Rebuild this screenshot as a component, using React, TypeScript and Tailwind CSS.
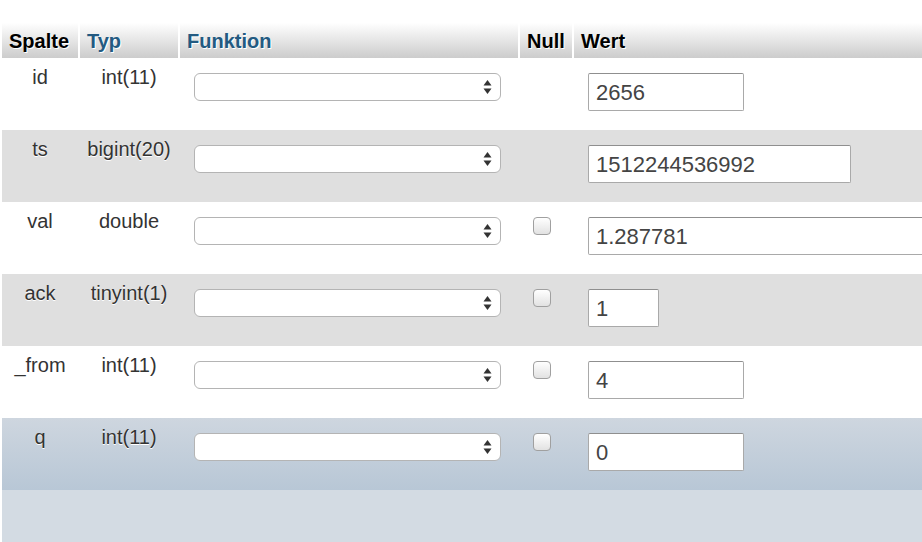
import React from "react";

type Row = { name: string; type: string; nullable: boolean; value: string; w: string; bg: string };

const rows: Row[] = [
  { name: "id", type: "int(11)", nullable: false, value: "2656", w: "w-[156px]", bg: "bg-white" },
  { name: "ts", type: "bigint(20)", nullable: false, value: "1512244536992", w: "w-[263px]", bg: "bg-[#dfdfdf]" },
  { name: "val", type: "double", nullable: true, value: "1.287781", w: "w-[420px]", bg: "bg-white" },
  { name: "ack", type: "tinyint(1)", nullable: true, value: "1", w: "w-[71px]", bg: "bg-[#dfdfdf]" },
  { name: "_from", type: "int(11)", nullable: true, value: "4", w: "w-[156px]", bg: "bg-white" },
  { name: "q", type: "int(11)", nullable: true, value: "0", w: "w-[156px]", bg: "bg-gradient-to-b from-[#ced6df] to-[#b8c7d6]" },
];

function HeaderCell({ children, w, blue }: { children: React.ReactNode; w: string; blue?: boolean }) {
  return (
    <div
      className={`${w} shrink-0 h-full flex items-center px-[7px] bg-gradient-to-b from-white to-[#cccccc] font-bold text-[20px] [text-shadow:1px_1px_0_#fff] ${
        blue ? "text-[#235a81]" : "text-black"
      }`}
    >
      {children}
    </div>
  );
}

function Select() {
  return (
    <div className="w-[307px] h-[28px] rounded-[6px] border border-[#b4b4b4] bg-white flex items-center justify-end pr-[8px] shadow-[inset_0_1px_0_#fff]">
      <div className="flex flex-col items-center leading-none text-[#333]">
        <svg width="9" height="16" viewBox="0 0 9 16">
          <path d="M4.5 1 L8.5 6.5 L0.5 6.5 Z" fill="#333" />
          <path d="M4.5 15 L8.5 9.5 L0.5 9.5 Z" fill="#333" />
        </svg>
      </div>
    </div>
  );
}

export default function App() {
  return (
    <div className="w-[922px] h-[542px] overflow-hidden bg-white font-['Liberation_Sans','Helvetica',Arial,sans-serif]">
      <div className="h-[23px]" />
      <div className="pl-[2px] flex gap-[2px] h-[35px]">
        <HeaderCell w="w-[76px]">Spalte</HeaderCell>
        <HeaderCell w="w-[98px]" blue>
          Typ
        </HeaderCell>
        <HeaderCell w="w-[338px]" blue>
          Funktion
        </HeaderCell>
        <HeaderCell w="w-[52px]">Null</HeaderCell>
        <HeaderCell w="w-[360px]">Wert</HeaderCell>
      </div>
      {rows.map((r) => (
        <div key={r.name} className={`ml-[2px] flex gap-[2px] h-[72px] ${r.bg}`}>
          <div className="w-[76px] shrink-0 text-center pt-[8px] text-[20px] leading-[23px] text-[#333] [text-shadow:0_1px_0_#fff]">
            {r.name}
          </div>
          <div className="w-[98px] shrink-0 text-center pt-[8px] text-[20px] leading-[23px] text-[#333] [text-shadow:0_1px_0_#fff]">
            {r.type}
          </div>
          <div className="w-[338px] shrink-0 pt-[15px] pl-[14px]">
            <Select />
          </div>
          <div className="w-[52px] shrink-0 pt-[15px] pl-[13px]">
            {r.nullable && (
              <div className="w-[18px] h-[18px] rounded-[4px] border border-[#a0a0a0] bg-gradient-to-b from-white to-[#e2e2e2]" />
            )}
          </div>
          <div className="shrink-0 pt-[15px] pl-[14px]">
            <div
              className={`${r.w} h-[38px] border border-[#a9a9a9] border-t-[#8f8f8f] rounded-[2px] bg-white flex items-center pl-[7px] text-[22px] text-[#444]`}
            >
              {r.value}
            </div>
          </div>
        </div>
      ))}
      <div className="ml-[2px] h-[60px] bg-[#d3dbe3]" />
    </div>
  );
}
